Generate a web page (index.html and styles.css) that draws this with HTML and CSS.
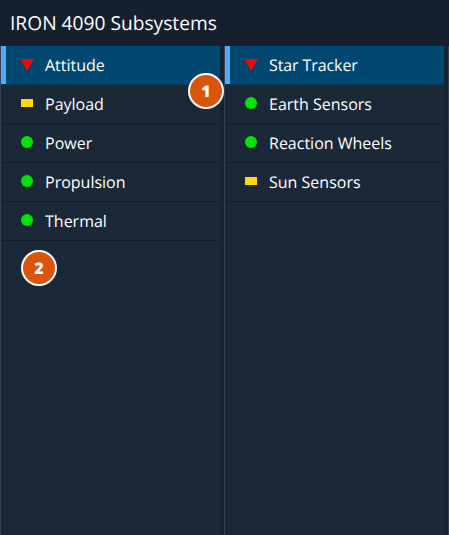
FILE: index.html
```html
<!DOCTYPE html>
<html lang="en">
<head>
<meta charset="utf-8">
<title>IRON 4090 Subsystems</title>
<link rel="stylesheet" href="styles.css">
</head>
<body>
<main class="panel">
  <header class="title">IRON 4090 Subsystems</header>
  <div class="columns">
    <ul class="list">
      <li class="row selected"><svg class="icon" viewBox="0 0 14 14"><path class="critical" d="M.2 1h13.6L7 13z"/></svg>Attitude</li>
      <li class="row"><svg class="icon" viewBox="0 0 14 14"><path class="caution" d="M1 2h12v8H1z"/></svg>Payload</li>
      <li class="row"><svg class="icon" viewBox="0 0 14 14"><circle class="normal" cx="7" cy="6" r="6"/></svg>Power</li>
      <li class="row"><svg class="icon" viewBox="0 0 14 14"><circle class="normal" cx="7" cy="6" r="6"/></svg>Propulsion</li>
      <li class="row"><svg class="icon" viewBox="0 0 14 14"><circle class="normal" cx="7" cy="6" r="6"/></svg>Thermal</li>
    </ul>
    <ul class="list">
      <li class="row selected"><svg class="icon" viewBox="0 0 14 14"><path class="critical" d="M.2 1h13.6L7 13z"/></svg><span class="tight">Star Tracker</span></li>
      <li class="row"><svg class="icon" viewBox="0 0 14 14"><circle class="normal" cx="7" cy="6" r="6"/></svg>Earth Sensors</li>
      <li class="row"><svg class="icon" viewBox="0 0 14 14"><circle class="normal" cx="7" cy="6" r="6"/></svg>Reaction Wheels</li>
      <li class="row"><svg class="icon" viewBox="0 0 14 14"><path class="caution" d="M1 2h12v8H1z"/></svg>Sun Sensors</li>
    </ul>
    <div class="list"></div>
  </div>
  <span class="badge badge-one">1</span>
  <span class="badge badge-two">2</span>
</main>
</body>
</html>
```
FILE: styles.css
```css
* { box-sizing: border-box; }
body { margin: 0; background: #161f2d; color: #fff; font-family: "Open Sans", sans-serif; text-rendering: geometricPrecision; }
.panel { position: relative; display: flex; flex-direction: column; width: 449px; height: 535px; overflow: hidden; }
.title { height: 46px; padding-left: 10px; font-size: 19.2px; line-height: 46px; }
.columns { flex: 1; display: grid; grid-template-columns: 220px 220px 1px; column-gap: 4px; background: #172330; }
.list { margin: 0; padding: 0; list-style: none; background: #1b2838; border-left: 1px solid #344150; }
.row { display: flex; align-items: center; height: 39px; padding-left: 19px; border-bottom: 1px solid #141e29; font-size: 16px; }
.selected { background: #004872; border-bottom-color: #053b59; box-shadow: inset 5px 0 #4dacff; }
.tight { letter-spacing: -0.1px; }
.icon { width: 14px; height: 14px; margin-right: 11px; overflow: visible; }
.critical { fill: #ff0000; }
.caution { fill: #ffd900; }
.normal { fill: #00e600; }
.badge { position: absolute; display: flex; align-items: center; justify-content: center; width: 36px; height: 36px; border: 2px solid #fff; border-radius: 50%; background: #da540b; font-size: 16px; font-weight: 800; }
.badge-one { left: 188px; top: 73px; }
.badge-two { left: 21px; top: 250px; }
```
